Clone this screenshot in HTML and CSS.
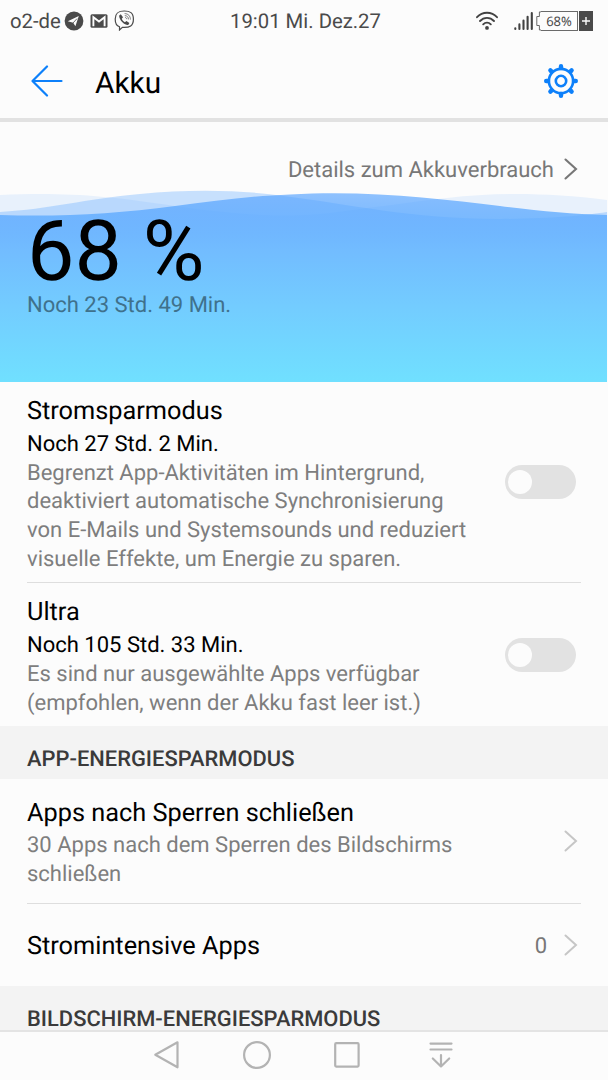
FILE: index.html
```
<!DOCTYPE html>
<html lang="de">
<head>
  <meta charset="utf-8">
  <title>Akku</title>
  <link rel="stylesheet" href="styles.css">
</head>
<body>
  <!-- status bar -->
  <div class="statusbar">
    <div class="status-left">
      <span class="carrier">o2-de</span>
      <svg class="ic-telegram" width="20" height="20" viewBox="0 0 20 20">
        <circle cx="10" cy="10" r="9.4" fill="#4a4a4a"/>
        <path d="M3.8 10.2 L14.8 5 L11.4 15.2 L9.2 11.8 Z" fill="#fcfcfc"/>
        <path d="M9 12 L13 7.6" stroke="#4a4a4a" stroke-width="0.8"/>
      </svg>
      <svg class="ic-mail" width="18" height="14" viewBox="0 0 18 14">
        <rect x="0.5" y="0.3" width="17" height="13.4" rx="1.5" fill="#4a4a4a"/>
        <path d="M3.4 12.2 V3.2 L9 7.6 L14.6 3.2 V12.2" fill="none" stroke="#fcfcfc" stroke-width="1.9"/>
      </svg>
      <svg class="ic-viber" width="21" height="21" viewBox="0 0 21 21" fill="none" stroke="#4a4a4a">
        <path d="M10.3 1 C4.5 1 1.2 2.6 1.2 9 C1.2 13.2 2.2 15.8 5.5 16.8 V20 L8.4 17.3 C15.8 17.8 19.4 15.8 19.4 9.2 C19.4 2.6 16 1 10.3 1 Z" stroke-width="1.2"/>
        <path d="M5.2 5.4 L6.8 4.2 L9 7.2 L7.8 8.8 C8.2 10.4 9.4 11.6 10.9 12.2 L12.4 11 L15.4 13 L14.2 14.9 C13 15.4 10.4 14.2 8.4 12.2 C6.4 10.2 4.8 7.2 5.2 5.4 Z" fill="#4a4a4a" stroke="none"/>
        <path d="M10.6 3.6 C14.2 3.6 16.4 6 16.4 9.6 M10.8 5.6 C13.2 5.8 14.4 7 14.5 9.4 M11 7.5 C12.2 7.6 12.7 8.2 12.8 9.2" stroke-width="0.7"/>
      </svg>
    </div>
    <div class="clock">19:01 Mi. Dez.27</div>
    <div class="status-right">
      <svg width="24" height="20" viewBox="0 0 24 20" fill="none" stroke="#424242" stroke-width="1.9" stroke-linecap="round">
        <path d="M2 6.2 C7.5 0.3 16.5 0.3 22 6.2"/>
        <path d="M5 10 C9 5.8 15 5.8 19 10"/>
        <path d="M8.2 13.3 C10.4 11 13.6 11 15.8 13.3"/>
        <circle cx="12" cy="16.9" r="1.9" fill="#424242" stroke="none"/>
      </svg>
      <svg class="ic-signal" width="21" height="20" viewBox="0 0 21 20" stroke="#424242" stroke-width="2.1" stroke-linecap="round">
        <path d="M2.3 17.2 V18 M6.4 13.4 V18 M10.5 9.6 V18 M14.6 5.8 V18 M18.8 2 V18"/>
      </svg>
      <div class="battery">
        <svg width="5" height="20" viewBox="0 0 5 20" fill="none" stroke="#6a6a6a">
          <path d="M5 0.9 H3.4 V5.5 H0.8 V14.5 H3.4 V19 H5"/>
        </svg>
        <span class="level">68%</span>
        <span class="plus">
          <svg width="10" height="10" viewBox="0 0 10 10" stroke="#fcfcfc" stroke-width="1.4">
            <path d="M5 1 V9 M1 5 H9"/>
          </svg>
        </span>
      </div>
    </div>
  </div>

  <!-- title -->
  <header class="header">
    <svg width="32" height="32" viewBox="0 0 32 32" fill="none" stroke="#0d80fa" stroke-width="2.2" stroke-linecap="round" stroke-linejoin="round">
      <path d="M16 1.5 L1.5 16 L16 30.5 M1.5 16 H30.5"/>
    </svg>
    <h1>Akku</h1>
    <svg class="gear" width="36" height="36" viewBox="-18 -18 36 36" fill="none" stroke="#0d80fa">
      <circle r="12.1" stroke-width="2.6"/>
      <circle r="5.2" stroke-width="2.6"/>
      <path d="M0 -13 V-14.8 M0 13 V14.8 M-13 0 H-14.8 M13 0 H14.8 M-9.4 -9.4 L-10.6 -10.6 M9.4 -9.4 L10.6 -10.6 M-9.4 9.4 L-10.6 10.6 M9.4 9.4 L10.6 10.6" stroke-width="4.4" stroke-linecap="round"/>
    </svg>
  </header>

  <!-- battery level with waves -->
  <section class="hero">
    <svg class="waves" width="607" height="192" viewBox="0 190 607 192">
      <defs>
        <linearGradient id="water" gradientUnits="userSpaceOnUse" x1="0" y1="193" x2="0" y2="382">
          <stop offset="0" stop-color="#4c9dff" stop-opacity="0.62"/>
          <stop offset="0.3" stop-color="#72bcff"/>
          <stop offset="0.6" stop-color="#73ccff"/>
          <stop offset="1" stop-color="#70e0ff"/>
        </linearGradient>
      </defs>
      <path d="M0 195 C60 192 105 195 175 206 C235 215 290 218 330 213 C370 208 410 202 447 198 C500 192 550 193 607 200 V382 H0 Z" fill="#5ca8ff" fill-opacity="0.12"/>
      <path d="M0 212 C50 209 85 199 140 194 C190 189 240 190 280 195.5 C350 204 410 219 500 219 C550 218.5 580 216 607 212 V382 H0 Z" fill="#5ca8ff" fill-opacity="0.33"/>
      <path d="M0 215 C60 217 115 214 175 206 C215 201 250 196 290 194.5 C370 190 440 199 500 206 C540 211 570 214 607 215 V382 H0 Z" fill="url(#water)"/>
    </svg>
    <div class="details">
      <span>Details zum Akkuverbrauch</span>
      <svg width="14" height="22" viewBox="0 0 14 22" fill="none" stroke="#777" stroke-width="2.1" stroke-linecap="round">
        <path d="M1.5 1.5 L12 11 L1.5 20.5"/>
      </svg>
    </div>
    <div class="percent">68 %</div>
    <div class="remaining">Noch 23 Std. 49 Min.</div>
  </section>

  <!-- power modes -->
  <section class="mode">
    <div class="text">
      <h2>Stromsparmodus</h2>
      <p class="time">Noch 27 Std. 2 Min.</p>
      <p class="desc">Begrenzt App-Aktivitäten im Hintergrund,<br>deaktiviert automatische Synchronisierung<br>von E-Mails und Systemsounds und reduziert<br>visuelle Effekte, um Energie zu sparen.</p>
    </div>
    <div class="switch"><span class="knob"></span></div>
  </section>
  <div class="line"></div>
  <section class="mode ultra">
    <div class="text">
      <h2>Ultra</h2>
      <p class="time">Noch 105 Std. 33 Min.</p>
      <p class="desc">Es sind nur ausgewählte Apps verfügbar<br>(empfohlen, wenn der Akku fast leer ist.)</p>
    </div>
    <div class="switch"><span class="knob"></span></div>
  </section>

  <h3 class="group">APP-ENERGIESPARMODUS</h3>
  <section class="item apps">
    <div class="text">
      <h2>Apps nach Sperren schließen</h2>
      <p class="desc">30 Apps nach dem Sperren des Bildschirms<br>schließen</p>
    </div>
    <svg width="14" height="22" viewBox="0 0 14 22" fill="none" stroke="#c6c6c6" stroke-width="2" stroke-linecap="round">
      <path d="M1.5 1.5 L12 11 L1.5 20.5"/>
    </svg>
  </section>
  <div class="line"></div>
  <section class="item intensive">
    <h2>Stromintensive Apps</h2>
    <span class="count">0</span>
    <svg width="14" height="22" viewBox="0 0 14 22" fill="none" stroke="#c6c6c6" stroke-width="2" stroke-linecap="round">
      <path d="M1.5 1.5 L12 11 L1.5 20.5"/>
    </svg>
  </section>
  <h3 class="group last">BILDSCHIRM-ENERGIESPARMODUS</h3>

  <!-- navigation keys -->
  <nav class="navbar">
    <svg width="28" height="30" viewBox="0 0 28 30"><path d="M24.5 2.3 V27.3 L2.3 14.8 Z"/></svg>
    <svg width="30" height="30" viewBox="0 0 30 30"><circle cx="15" cy="15" r="12.9"/></svg>
    <svg width="28" height="28" viewBox="0 0 28 28"><rect x="2.2" y="2.2" width="23.4" height="23.4" rx="1"/></svg>
    <svg width="26" height="28" viewBox="0 0 26 28"><path d="M2.5 2.6 H23.5 M2.5 8.5 H23.5 M13 14 V25.5 M4.8 17.5 L13 25.5 L21.2 17.5"/></svg>
  </nav>
</body>
</html>
```
FILE: styles.css
```
* {
  box-sizing: border-box;
}

body {
  margin: 0;
  width: 608px;
  height: 1080px;
  overflow: hidden;
  background-color: #fcfcfc;
  font-family: Roboto, sans-serif;
  color: #000;
  text-rendering: geometricPrecision;
}

h1, h2, h3, p {
  margin: 0;
  font-weight: 400;
}

svg {
  display: block;
  flex: none;
}

/* status bar */
.statusbar {
  display: grid;
  grid-template-columns: 1fr auto 1fr;
  align-items: center;
  height: 41px;
  padding: 0 15px 0 10px;
  color: #4a4a4a;
}

.status-left,
.status-right {
  display: flex;
  align-items: center;
}

.status-right {
  justify-content: flex-end;
}

.carrier {
  font-size: 20.3px;
  margin-right: 3px;
}

.ic-mail {
  margin: 0 6px 0 6px;
}

.clock {
  padding-left: 8px;
  font-size: 20.3px;
}

.ic-signal {
  margin: 0 2px 0 14px;
}

.battery {
  display: flex;
  height: 20px;
}

.level {
  width: 37px;
  border: 1px solid #6a6a6a;
  border-left: none;
  font: 13px/18px "Noto Sans", sans-serif;
  text-align: center;
}

.plus {
  display: flex;
  align-items: center;
  justify-content: center;
  width: 14px;
  margin-left: 1px;
  background-color: #4a4a4a;
}

/* header */
.header {
  display: flex;
  align-items: center;
  height: 81px;
  padding: 2px 29px 0 31px;
  border-bottom: 4px solid #e2e2e2;
}

.header h1 {
  margin-left: 32px;
  padding-top: 5px;
  font-size: 29.8px;
}

.gear {
  margin-left: auto;
}

/* hero */
.hero {
  display: grid;
  grid-template-rows: 92px 77px 1fr;
  height: 260px;
  padding-left: 27px;
}

.waves {
  grid-column: 1;
  grid-row: 1 / 4;
  align-self: end;
  margin-left: -27px;
}

.details {
  grid-column: 1;
  grid-row: 1;
  display: flex;
  align-items: center;
  justify-content: flex-end;
  gap: 10px;
  height: 94px;
  padding-right: 30px;
  font-size: 22px;
  color: #777;
}

.details span {
  padding-top: 2px;
}

.percent {
  grid-column: 1;
  grid-row: 2;
  font-size: 84.4px;
  line-height: 76px;
}

.remaining {
  grid-column: 1;
  grid-row: 3;
  font-size: 22px;
  line-height: 29px;
  color: #3f718c;
}

/* list */
.mode,
.item {
  display: flex;
  align-items: center;
  padding: 0 32px 0 27px;
}

.mode {
  height: 200px;
}

.mode.ultra {
  height: 143px;
}

.text {
  flex: 1;
  padding-top: 5px;
  white-space: nowrap;
}

h2 {
  font-size: 25.3px;
  line-height: 34px;
}

.time {
  font-size: 22px;
  line-height: 31px;
}

.desc {
  font-size: 22px;
  line-height: 28.7px;
  color: #7e7e7e;
}

.switch {
  width: 71px;
  height: 34px;
  padding: 5px 3px;
  border-radius: 17px;
  background-color: #e2e2e2;
}

.knob {
  display: block;
  width: 24px;
  height: 24px;
  border-radius: 50%;
  background-color: #fcfcfc;
}

.line {
  height: 1px;
  margin: 0 27px;
  background-color: #dedede;
}

.group {
  height: 53px;
  padding: 14px 27px 0;
  background-color: #f3f3f3;
  font-size: 21.9px;
  font-weight: 500;
  line-height: 40px;
  color: #3a3a3a;
}

.item {
  padding-right: 30px;
}

.apps {
  height: 124px;
}

.apps .desc {
  margin-top: 1px;
}

.intensive {
  height: 82px;
}

.intensive h2 {
  padding-top: 3px;
}

.count {
  margin: 0 17px 0 auto;
  padding-top: 2px;
  font-size: 22px;
  color: #777;
}

.group.last {
  height: 44px;
}

/* navigation */
.navbar {
  display: flex;
  align-items: center;
  height: 50px;
  padding: 0 0 2px 153px;
  border-top: 2px solid #e4e4e4;
  background-color: #fcfcfc;
}

.navbar svg {
  fill: none;
  stroke: #b3b3b3;
  stroke-width: 2.2;
  stroke-linecap: round;
  stroke-linejoin: round;
}

.navbar svg + svg {
  margin-left: 61px;
}

.navbar svg:last-child {
  margin-left: 67px;
}
```
